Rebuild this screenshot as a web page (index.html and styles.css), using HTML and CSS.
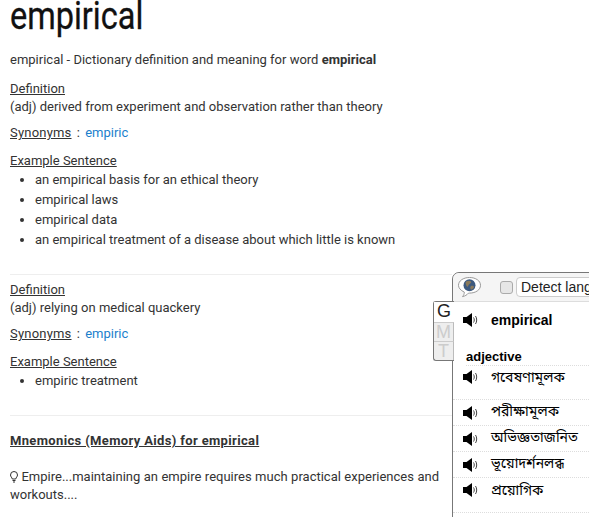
FILE: index.html
```html
<!DOCTYPE html>
<html lang="en">
<head>
    <meta charset="UTF-8">
    <title>empirical</title>
    <link rel="stylesheet" href="styles.css">
</head>
<body>
<div class="container">
    <h1>empirical</h1>
    <p class="intro">empirical - Dictionary definition and meaning for word <b>empirical</b></p>

    <div class="sense">
        <p><u>Definition</u><br>(adj) derived from experiment and observation rather than theory</p>
        <p class="syn"><u>Synonyms</u> : <a href="#">empiric</a></p>
        <p class="ex"><u>Example Sentence</u></p>
        <ul>
            <li>an empirical basis for an ethical theory</li>
            <li>empirical laws</li>
            <li>empirical data</li>
            <li>an empirical treatment of a disease about which little is known</li>
        </ul>
    </div>
    <hr>
    <div class="sense">
        <p><u>Definition</u><br>(adj) relying on medical quackery</p>
        <p class="syn"><u>Synonyms</u> : <a href="#">empiric</a></p>
        <p class="ex"><u>Example Sentence</u></p>
        <ul>
            <li>empiric treatment</li>
        </ul>
    </div>
    <hr>
    <p class="mnemo-title"><b><u>Mnemonics (Memory Aids) for empirical</u></b></p>
    <p class="mnemo">
        <svg class="bulb" width="8" height="12" viewBox="0 0 8 12"><path d="M4 .5A3.500 3.500 0 0 0 .5 4c0 1.600 1.500 2.500 1.800 4h3.400c.3-1.500 1.800-2.400 1.800-4A3.500 3.500 0 0 0 4 .5z" fill="none" stroke="#333"/><path d="M2.500 9.500h3M3 11h2" stroke="#333"/></svg>
        Empire...maintaining an empire requires much practical experiences and workouts....
    </p>
</div>

<div class="popup">
    <div class="bar">
        <svg class="globe" width="25" height="23" viewBox="0 0 25 23">
            <path d="M12.500 1.500c6.300 0 11 3.300 11 7.800s-4.700 7.800-11 7.800l-1 0c-1.500 1.800-3.500 3-6 3.500 1.200-1.300 1.800-2.700 1.800-4.500C3.500 14.300 1.500 12 1.500 9.300c0-4.500 4.700-7.800 11-7.800z" fill="#fff" stroke="#999"/>
            <circle cx="12.500" cy="9.300" r="6" fill="#3d5a80"/>
            <path d="M9 5.500c2-1 4-1 5 0s-1 2-2 3-1 3-2 2-2-4-1-5zM14 10c1.500-.5 3 0 3 1s-2 3-3 2.500-1-3 0-3.500z" fill="#8a7a5c"/>
        </svg>
        <span class="check"></span>
        <span class="lang">Detect language</span>
    </div>
    <div class="word">
        <svg class="spk"><use href="#speaker"/></svg>
        <b>empirical</b>
    </div>
    <div class="pos">adjective</div>
    <div class="row tall"><svg class="spk"><use href="#speaker"/></svg><span>গবেষণামূলক</span></div>
    <div class="row"><svg class="spk"><use href="#speaker"/></svg><span>পরীক্ষামূলক</span></div>
    <div class="row"><svg class="spk"><use href="#speaker"/></svg><span>অভিজ্ঞতাজনিত</span></div>
    <div class="row"><svg class="spk"><use href="#speaker"/></svg><span>ভূয়োদর্শনলব্ধ</span></div>
    <div class="row last"><svg class="spk"><use href="#speaker"/></svg><span>প্রয়োগিক</span></div>
</div>

<div class="tabs">
    <div class="tab on">G</div>
    <div class="tab">M</div>
    <div class="tab">T</div>
</div>

<svg width="0" height="0" class="defs">
    <symbol id="speaker" viewBox="0 0 16 14">
        <path d="M0 4h3.500L9 0v14L3.500 10H0z" fill="#000"/>
        <path d="M10.500 4.500c1 1.500 1 3.500 0 5M12.500 3c1.600 2.300 1.600 5.700 0 8" fill="none" stroke="#444"/>
    </symbol>
</svg>
</body>
</html>
```

FILE: styles.css
```css
html, body {
    height: 100%;
}
body {
    margin: 0;
    font-family: Roboto, "Liberation Sans", sans-serif;
    font-size: 13px;
    line-height: 18px;
    color: #333;
    background-color: #fff;
    overflow: hidden;
}
.container {
    width: 442px;
    padding: 0 0 0 10px;
}
h1 {
    margin: 0;
    font-size: 38px;
    font-weight: normal;
    line-height: 33px;
    color: #111;
    -webkit-text-stroke: 0.3px #111;
    transform: scaleX(0.855);
    transform-origin: left;
}
p {
    margin: 0;
}
.intro {
    margin-top: 18px;
}
.sense {
    margin-top: 11px;
}
.syn {
    margin-top: 8px;
    word-spacing: 2px;
}
.syn u {
    letter-spacing: 0.2px;
}
.ex {
    margin-top: 10px;
}
ul {
    margin: 0;
    padding-left: 25px;
    line-height: 20px;
}
hr {
    height: 1px;
    margin: 24px 0 0;
    border: none;
    background-color: #eee;
}
hr + .sense {
    margin-top: 6px;
}
.mnemo-title {
    margin-top: 16px;
    letter-spacing: 0.35px;
}
.mnemo {
    width: 429px;
    margin-top: 18px;
    text-align: justify;
}
.bulb {
    vertical-align: -2px;
}
a {
    color: #1b7fcc;
    text-decoration: none;
}
.defs {
    position: absolute;
}

/* translate popup, sits over the page */
.popup {
    position: absolute;
    left: 452px;
    top: 272px;
    width: 160px;
    height: 260px;
    border: 1px solid #777;
    border-top-left-radius: 7px;
    background-color: #fff;
    color: #000;
    font-family: "Liberation Sans", Arial, sans-serif;
}
.bar {
    display: flex;
    align-items: center;
    height: 28px;
    padding-left: 4px;
    background-color: #f5f5f5;
    border-bottom: 1px solid #ddd;
    border-top-left-radius: 7px;
}
.globe {
    flex: none;
}
.check {
    flex: none;
    width: 11px;
    height: 11px;
    margin-left: 18px;
    border: 1px solid #aaa;
    border-radius: 3px;
    background-color: #e6e6e6;
}
.lang {
    flex: none;
    margin-left: 3px;
    padding: 0 4px;
    border: 1px solid #ccc;
    border-radius: 4px;
    background-color: #fff;
    font-size: 14px;
    line-height: 18px;
    color: #222;
}
.spk {
    flex: none;
    width: 16px;
    height: 14px;
    margin-right: 12px;
}
.word {
    display: flex;
    align-items: center;
    height: 36px;
    padding-left: 10px;
    font-size: 14px;
}
.pos {
    margin: 10px 0 0 13px;
    font-weight: bold;
    font-size: 13px;
    line-height: 17px;
    border-bottom: 1px dotted #ddd;
}
.row {
    display: flex;
    align-items: center;
    height: 25px;
    padding-left: 10px;
    border-bottom: 1px dotted #ddd;
    font-family: "Noto Sans Bengali", "Noto Sans", "Liberation Serif", sans-serif;
    font-size: 14px;
}
.row.tall {
    height: 34px;
    align-items: flex-start;
    padding-top: 4px;
    box-sizing: border-box;
}
.row.last {
    height: 35px;
    align-items: flex-start;
    padding-top: 5px;
    box-sizing: border-box;
}
.tabs {
    position: absolute;
    left: 433px;
    top: 301px;
    width: 20px;
    border: 1px solid #777;
    border-right: none;
    border-radius: 3px 0 0 3px;
    background-color: #eee;
    font-family: "Liberation Sans", Arial, sans-serif;
    font-size: 18px;
    text-align: center;
    color: #ccc;
}
.tab {
    box-sizing: border-box;
    height: 19px;
    line-height: 19px;
    border-top: 1px solid #ccc;
    border-right: 1px solid #bbb;
}
.tab.on {
    height: 20px;
    background-color: #fff;
    color: #222;
    border-top: none;
    border-right: none;
}
```
